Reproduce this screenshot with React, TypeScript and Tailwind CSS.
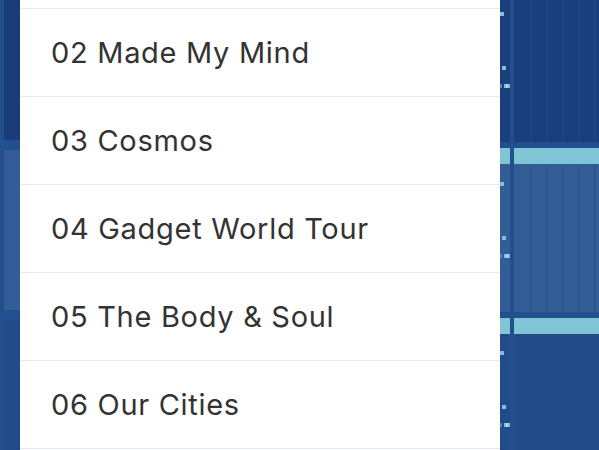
const tracks = [
  "02 Made My Mind",
  "03 Cosmos",
  "04 Gadget World Tour",
  "05 The Body & Soul",
  "06 Our Cities",
];

function Dots({ top }: { top: number }) {
  return (
    <>
      <div className="absolute left-0 w-[4px] h-[4px] bg-[#7fc0d8]" style={{ top: top }} />
      <div className="absolute left-[2px] w-[4px] h-[4px] bg-[#7fc0d8]" style={{ top: top + 54 }} />
      <div className="absolute left-0 flex h-[4px]" style={{ top: top + 72 }}>
        <div className="w-[2px] bg-[#4f86b8]" />
        <div className="w-[2px]" />
        <div className="w-[2px] bg-[#7fc0d8]" />
        <div className="w-[2px] bg-[#a8dbe6]" />
        <div className="w-[2px] bg-[#7fc0d8]" />
      </div>
    </>
  );
}

function Columns({ bg, sep }: { bg: string; sep: string }) {
  return (
    <div className={`flex-1 flex ${bg}`}>
      <div className="w-[16px]" />
      <div className={`w-[2px] ${sep}`} />
      <div className="w-[14px]" />
      <div className={`w-[2px] ${sep}`} />
      <div className="w-[14px]" />
      <div className={`w-[2px] ${sep}`} />
      <div className="w-[14px]" />
      <div className={`w-[2px] ${sep}`} />
      <div className="w-[14px]" />
      <div className={`w-[2px] ${sep}`} />
      <div className="flex-1" />
    </div>
  );
}

export default function App() {
  return (
    <div className="w-[599px] h-[450px] flex overflow-hidden bg-[#1b3f7c]">
      {/* left strip */}
      <div className="w-[20px] flex">
        <div className="w-[4px] bg-[#21508f]" />
        <div className="flex-1 flex flex-col">
          <div className="h-[140px] bg-[#1a3d78]" />
          <div className="h-[10px] bg-[#22508f]" />
          <div className="h-[160px] bg-[#345d97]" />
          <div className="h-[10px] bg-[#22508f]" />
          <div className="flex-1 bg-[#234b87]" />
        </div>
      </div>

      {/* list */}
      <div className="w-[480px] bg-white flex flex-col font-['Inter',sans-serif] text-[#333333]">
        <div className="h-[9px] shrink-0 border-b border-[#e3e8f4]" />
        {tracks.map((t) => (
          <div
            key={t}
            className="h-[88px] shrink-0 border-b border-[#e3e8f4] flex items-center pl-[31px] text-[29px] tracking-[0.7px]"
          >
            {t}
          </div>
        ))}
      </div>

      {/* right grid */}
      <div className="flex-1 flex relative">
        <div className="w-[10px] flex flex-col">
          <div className="h-[142px] bg-[#1a3f7c]" />
          <div className="h-[6px] bg-[#22508f]" />
          <div className="h-[16px] bg-[#80c5d6]" />
          <div className="h-[148px] bg-[#345d97]" />
          <div className="h-[6px] bg-[#22508f]" />
          <div className="h-[16px] bg-[#80c5d6]" />
          <div className="flex-1 bg-[#234b87]" />
        </div>
        <div className="w-[4px] bg-[#22508f]" />
        <div className="flex-1 flex flex-col">
          <div className="h-[142px] flex">
            <Columns bg="bg-[#1a3f7c]" sep="bg-[#1f4683]" />
          </div>
          <div className="h-[6px] bg-[#22508f]" />
          <div className="h-[16px] bg-[#80c5d6]" />
          <div className="h-[148px] flex">
            <Columns bg="bg-[#345d97]" sep="bg-[#2b5490]" />
          </div>
          <div className="h-[6px] bg-[#22508f]" />
          <div className="h-[16px] bg-[#80c5d6]" />
          <div className="flex-1 flex">
            <Columns bg="bg-[#234b87]" sep="bg-[#224a86]" />
          </div>
        </div>
        <Dots top={12} />
        <Dots top={182} />
        <Dots top={351} />
      </div>
    </div>
  );
}
